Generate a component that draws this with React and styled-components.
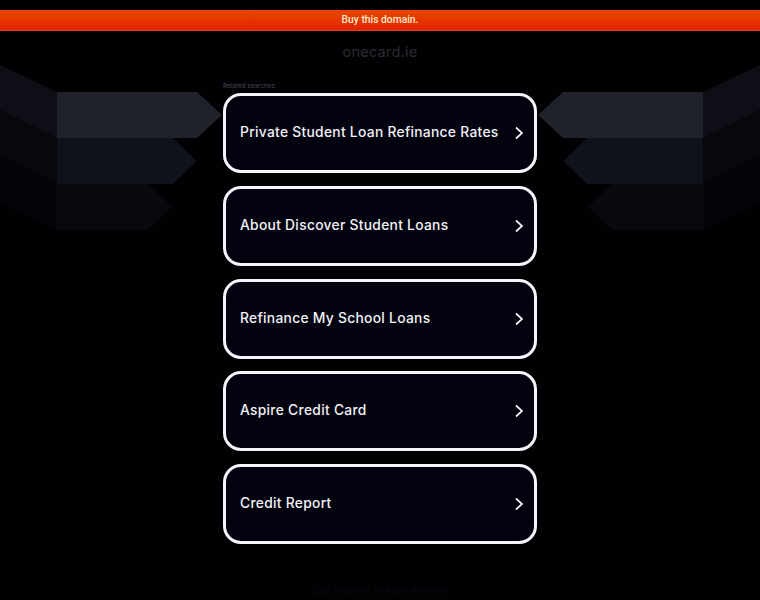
import React from "react";
import styled, { createGlobalStyle } from "styled-components";

const GlobalStyle = createGlobalStyle`
html, body {
  margin: 0;
  padding: 0;
  background: #010104;
}
`;

const Page = styled.div`
  position: relative;
  height: 600px;
  overflow: hidden;
  font-family: Inter, "Liberation Sans", sans-serif;
  padding-top: 10px;
  box-sizing: border-box;
`;

const Art = styled.svg`
  position: absolute;
  left: 0;
  top: 0;
`;

const Banner = styled.a`
  position: relative;
  display: block;
  height: 21px;
  line-height: 20px;
  text-align: center;
  font-family: Roboto, sans-serif;
  font-size: 10.3px;
  font-weight: 500;
  color: #ffe9c9;
  background: linear-gradient(#e84800, #e02400);
  border-bottom: 1px solid #f03a10;
  box-sizing: border-box;
`;

const Domain = styled.div`
  position: relative;
  margin-top: 11px;
  height: 20px;
  line-height: 20px;
  text-align: center;
  font-size: 14.5px;
  letter-spacing: 0.25px;
  color: #2a2b30;
`;

const Main = styled.div`
  position: relative;
  width: 314px;
  margin: 18px auto 0;
`;

const Label = styled.div`
  height: 13px;
  line-height: 12px;
  font-size: 6.2px;
  letter-spacing: 0.1px;
  color: #4a4c55;
`;

const List = styled.div`
  display: flex;
  flex-direction: column;
  gap: 12.75px;
`;

const Card = styled.a`
  display: flex;
  align-items: center;
  justify-content: space-between;
  height: 80px;
  box-sizing: border-box;
  padding: 0 10px 0 14px;
  border: 3px solid #f4f4fa;
  border-radius: 18px;
  background: #02030f;
  color: #f2f2f6;
  font-size: 13.8px;
  font-weight: 500;
  letter-spacing: 0.3px;
`;

const CardText = styled.span`
  margin-bottom: 2px;
`;

const Footer = styled.div`
  position: absolute;
  left: 0;
  right: 0;
  top: 584px;
  text-align: center;
  font-size: 7.9px;
  line-height: 12px;
  color: #0b0b0f;
`;

const rows = [
  { main: "57,92 197,92 222,115 197,138 57,138", wing: "0,65 57,92 57,138 0,110", fill: "#20222b", wingFill: "#0e0f16" },
  { main: "57,138 173,138 197,161 173,184 57,184", wing: "0,110 57,138 57,184 0,155", fill: "#10121a", wingFill: "#07080d" },
  { main: "57,184 148,184 172,207 148,230 57,230", wing: "0,155 57,184 57,230 0,202", fill: "#08090e", wingFill: "#040509" },
];

const searches = [
  "Private Student Loan Refinance Rates",
  "About Discover Student Loans",
  "Refinance My School Loans",
  "Aspire Credit Card",
  "Credit Report",
];

const Chevron = () => (
  <svg width="10" height="14" viewBox="0 0 10 14" fill="none">
    <path d="M2 1.5 L8 7 L2 12.5" stroke="#f2f2f6" strokeWidth="1.7" />
  </svg>
);

export default function App() {
  return (
    <Page>
      <GlobalStyle />
      <Art width="760" height="600" viewBox="0 0 760 600">
        {[false, true].map((mirror) => (
          <g key={String(mirror)} transform={mirror ? "translate(760 0) scale(-1 1)" : undefined}>
            {rows.map((row) => (
              <g key={row.main}>
                <polygon points={row.wing} fill={row.wingFill} />
                <polygon points={row.main} fill={row.fill} />
              </g>
            ))}
          </g>
        ))}
      </Art>
      <Banner>Buy this domain.</Banner>
      <Domain>onecard.ie</Domain>
      <Main>
        <Label>Related searches</Label>
        <List>
          {searches.map((text) => (
            <Card key={text}>
              <CardText>{text}</CardText>
              <Chevron />
            </Card>
          ))}
        </List>
      </Main>
      <Footer>2022 Copyright. All Rights Reserved.</Footer>
    </Page>
  );
}
